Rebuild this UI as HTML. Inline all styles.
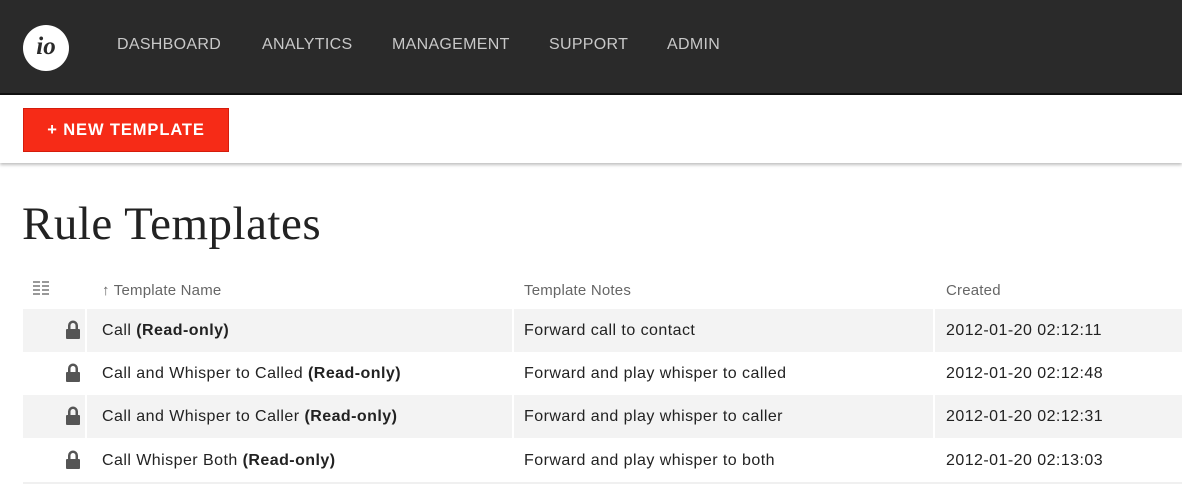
<!DOCTYPE html>
<html><head><style>
*{margin:0;padding:0;box-sizing:border-box}
body{width:1182px;height:484px;overflow:hidden;background:#fff;font-family:"Liberation Sans",sans-serif;color:#222}
.nav{height:95px;background:#2a2a2a;border-bottom:2px solid #111;position:relative}
.logo{position:absolute;left:23px;top:25px;width:46px;height:46px;border-radius:50%;background:#fff;color:#2a2a2a;font:italic bold 25px "Liberation Serif",serif;text-align:center;line-height:44px}
.nav a{position:absolute;top:36px;color:#c8c8c8;font-size:16px;text-decoration:none;letter-spacing:.3px}
.bar{height:68px;background:#fff;box-shadow:0 2px 3px rgba(0,0,0,.25);position:relative}
.btn{position:absolute;left:23px;top:13px;width:206px;height:44px;background:#f62b17;border:1px solid #d41c0c;color:#fff;font-weight:bold;font-size:16.5px;line-height:42px;text-align:center;letter-spacing:.9px}
h1{position:absolute;left:22px;top:197px;font:400 47px "Liberation Serif",serif;color:#222;letter-spacing:.5px}
.hdr{position:absolute;top:282px;font-size:15px;color:#666;letter-spacing:.2px}
.row{position:absolute;left:23px;width:1159px;height:43px;font-size:16px;color:#222;letter-spacing:.45px}
.row.s{background:#f3f3f3}
.row span{position:absolute;top:13px;white-space:nowrap}
.row i{position:absolute;top:0;width:2px;height:43px;background:#fff}
.lock{position:absolute;left:42px;top:11px;width:16px;height:19px}
</style></head><body>
<div class="nav"><div class="logo">io</div>
<a style="left:117px">DASHBOARD</a><a style="left:262px">ANALYTICS</a><a style="left:392px">MANAGEMENT</a><a style="left:549px">SUPPORT</a><a style="left:667px">ADMIN</a></div>
<div class="bar"><div class="btn">+ NEW TEMPLATE</div></div>
<h1>Rule Templates</h1>
<svg style="position:absolute;left:33px;top:281px" width="17" height="16"><g fill="#999"><rect x="0" y="0" width="7" height="2"/><rect x="0" y="4" width="7" height="2"/><rect x="0" y="8" width="7" height="2"/><rect x="0" y="12" width="7" height="2"/><rect x="9" y="0" width="7" height="2"/><rect x="9" y="4" width="7" height="2"/><rect x="9" y="8" width="7" height="2"/><rect x="9" y="12" width="7" height="2"/></g></svg>
<div class="hdr" style="left:102px">↑ Template Name</div>
<div class="hdr" style="left:524px">Template Notes</div>
<div class="hdr" style="left:946px">Created</div>
<div class="row s" style="top:309px"><i style="left:62px"></i><i style="left:489px"></i><i style="left:910px"></i>
<svg class="lock" viewBox="0 0 16 19"><path d="M3 9V5.5a5 5 0 0 1 10 0V9h-2.5V5.5a2.5 2.5 0 0 0-5 0V9z" fill="#555"/><rect x="1" y="9" width="14" height="10" rx="1" fill="#555"/></svg>
<span style="left:79px">Call <b>(Read-only)</b></span><span style="left:501px">Forward call to contact</span><span style="left:923px">2012-01-20 02:12:11</span></div>
<div class="row" style="top:352px">
<svg class="lock" viewBox="0 0 16 19"><path d="M3 9V5.5a5 5 0 0 1 10 0V9h-2.5V5.5a2.5 2.5 0 0 0-5 0V9z" fill="#555"/><rect x="1" y="9" width="14" height="10" rx="1" fill="#555"/></svg>
<span style="left:79px">Call and Whisper to Called <b>(Read-only)</b></span><span style="left:501px">Forward and play whisper to called</span><span style="left:923px">2012-01-20 02:12:48</span></div>
<div class="row s" style="top:395px"><i style="left:62px"></i><i style="left:489px"></i><i style="left:910px"></i>
<svg class="lock" viewBox="0 0 16 19"><path d="M3 9V5.5a5 5 0 0 1 10 0V9h-2.5V5.5a2.5 2.5 0 0 0-5 0V9z" fill="#555"/><rect x="1" y="9" width="14" height="10" rx="1" fill="#555"/></svg>
<span style="left:79px">Call and Whisper to Caller <b>(Read-only)</b></span><span style="left:501px">Forward and play whisper to caller</span><span style="left:923px">2012-01-20 02:12:31</span></div>
<div class="row" style="top:439px">
<svg class="lock" viewBox="0 0 16 19"><path d="M3 9V5.5a5 5 0 0 1 10 0V9h-2.5V5.5a2.5 2.5 0 0 0-5 0V9z" fill="#555"/><rect x="1" y="9" width="14" height="10" rx="1" fill="#555"/></svg>
<span style="left:79px">Call Whisper Both <b>(Read-only)</b></span><span style="left:501px">Forward and play whisper to both</span><span style="left:923px">2012-01-20 02:13:03</span></div>
<div style="position:absolute;left:23px;top:482px;width:1159px;height:2px;background:#f0f0f0"></div>
</body></html>
